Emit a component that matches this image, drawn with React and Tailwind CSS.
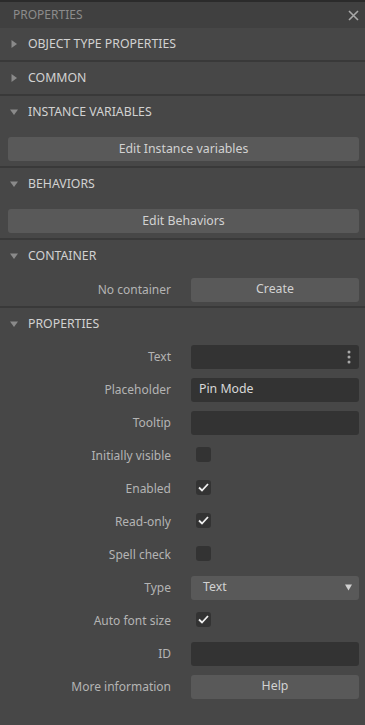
import React from 'react';

const font = { fontFamily: '"Noto Sans", "Open Sans", sans-serif' };

function Arrow({ open }) {
  return (
    <svg width="8" height="8" viewBox="0 0 8 8" className="shrink-0">
      {open ? (
        <polygon points="0,1.5 8,1.5 4,7" fill="#8a8a8a" />
      ) : (
        <polygon points="1.5,0 7,4 1.5,8" fill="#8a8a8a" />
      )}
    </svg>
  );
}

function Header({ title, open }) {
  return (
    <div className="h-8 flex items-center pl-[10px] gap-[10px] text-[12.3px] text-[#d2d2d2]">
      <Arrow open={open} />
      <span>{title}</span>
    </div>
  );
}

function Divider() {
  return <div className="h-[2px] bg-[#393939]" />;
}

function Row({ label, children }) {
  return (
    <div className="h-[33px] flex items-center">
      <div className="w-[171px] shrink-0 text-right text-[12px] text-[#b4b4b4]">{label}</div>
      <div className="ml-5 w-[168px] flex items-center">{children}</div>
    </div>
  );
}

function Input({ value, dots }) {
  return (
    <div className="w-full h-6 rounded-[3px] bg-[#333333] flex items-center px-2 text-[12.3px] text-[#d8d8d8]">
      <span className="flex-1">{value}</span>
      {dots && (
        <svg width="4" height="14" viewBox="0 0 4 14">
          <circle cx="2" cy="2" r="1.5" fill="#a8a8a8" />
          <circle cx="2" cy="7" r="1.5" fill="#a8a8a8" />
          <circle cx="2" cy="12" r="1.5" fill="#a8a8a8" />
        </svg>
      )}
    </div>
  );
}

function Button({ label }) {
  return (
    <div className="w-full h-6 rounded-[3px] bg-[#595959] flex items-center justify-center text-[12.3px] text-[#d2d2d2]">
      {label}
    </div>
  );
}

function Check({ checked }) {
  return (
    <div className="ml-[5px] -mt-[3px] w-[15px] h-[15px] rounded-[3px] bg-[#333333] flex items-center justify-center">
      {checked && (
        <svg width="11" height="9" viewBox="0 0 11 9">
          <polyline points="1,4.5 4,7.5 10,1" fill="none" stroke="#f0f0f0" strokeWidth="1.8" />
        </svg>
      )}
    </div>
  );
}

export default function App() {
  return (
    <div className="w-[365px] h-[725px] bg-[#474747] overflow-hidden" style={font}>
      <div className="h-[2px] bg-[#2b2b2b]" />
      {/* title bar */}
      <div className="h-[26px] bg-[#404040] flex items-center justify-between pl-[13px] pr-[6px]">
        <span className="text-[12px] text-[#8c8c8c]">PROPERTIES</span>
        <svg width="11" height="11" viewBox="0 0 11 11">
          <path d="M1 1 L10 10 M10 1 L1 10" stroke="#a8a8a8" strokeWidth="1.6" />
        </svg>
      </div>

      <Header title="OBJECT TYPE PROPERTIES" />
      <Divider />
      <Header title="COMMON" />
      <Divider />

      <Header title="INSTANCE VARIABLES" open />
      <div className="pl-2 pr-[6px] pt-[9px] pb-[5px]">
        <Button label="Edit Instance variables" />
      </div>
      <Divider />

      <Header title="BEHAVIORS" open />
      <div className="pl-2 pr-[6px] pt-[9px] pb-[5px]">
        <Button label="Edit Behaviors" />
      </div>
      <Divider />

      <Header title="CONTAINER" open />
      <div className="pt-px">
        <Row label="No container">
          <Button label="Create" />
        </Row>
      </div>
      <Divider />

      <Header title="PROPERTIES" open />
      <Row label="Text">
        <Input dots />
      </Row>
      <Row label="Placeholder">
        <Input value="Pin Mode" />
      </Row>
      <Row label="Tooltip">
        <Input />
      </Row>
      <Row label="Initially visible">
        <Check />
      </Row>
      <Row label="Enabled">
        <Check checked />
      </Row>
      <Row label="Read-only">
        <Check checked />
      </Row>
      <Row label="Spell check">
        <Check />
      </Row>
      <Row label="Type">
        <div className="w-full h-6 rounded-[3px] bg-[#595959] flex items-center pl-3 pr-[7px] text-[12.3px] text-[#d2d2d2]">
          <span className="flex-1">Text</span>
          <svg width="7" height="7" viewBox="0 0 7 7">
            <polygon points="0,0.5 7,0.5 3.5,6.5" fill="#d0d0d0" />
          </svg>
        </div>
      </Row>
      <Row label="Auto font size">
        <Check checked />
      </Row>
      <Row label="ID">
        <Input />
      </Row>
      <Row label="More information">
        <Button label="Help" />
      </Row>
    </div>
  );
}
